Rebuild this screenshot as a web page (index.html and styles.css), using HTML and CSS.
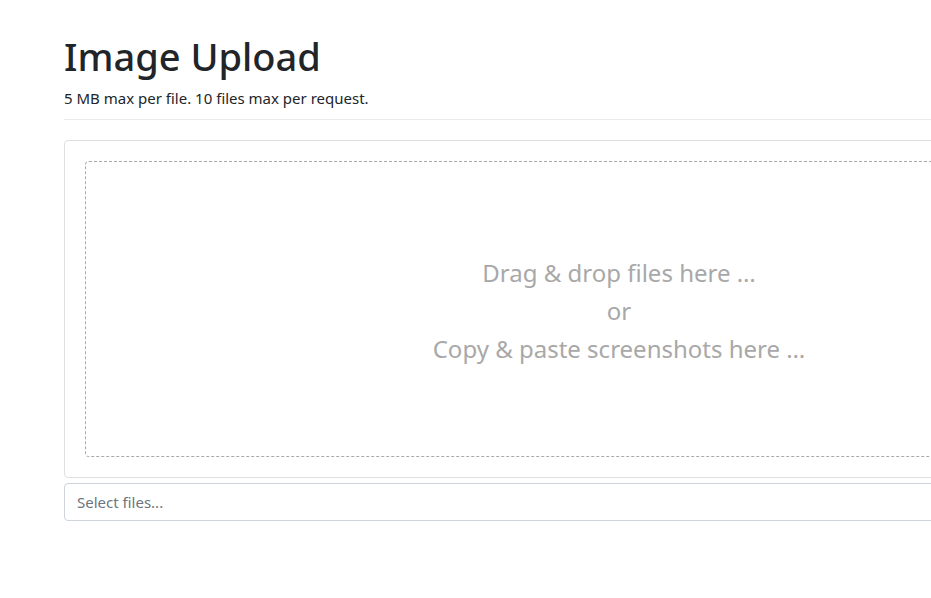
FILE: index.html
```html
<!DOCTYPE html>
<html lang="en">
<head>
<meta charset="utf-8">
<title>Image Upload</title>
<link rel="stylesheet" href="styles.css">
</head>
<body>
<div class="viewport">
  <div class="container">
    <header class="page-header">
      <h1 class="title">Image Upload</h1>
      <p class="subtitle">5 MB max per file. 10 files max per request.</p>
    </header>
    <div class="card">
      <div class="dropzone">
        <div class="drop-text">
          <div>Drag &amp; drop files here …</div>
          <div>or</div>
          <div>Copy &amp; paste screenshots here …</div>
        </div>
      </div>
    </div>
    <div class="file-input">Select files...</div>
  </div>
</div>
</body>
</html>
```

FILE: styles.css
```css
html, body {
  margin: 0;
  padding: 0;
  background: #fff;
}
.viewport {
  width: 931px;
  height: 598px;
  overflow: hidden;
}
.container {
  width: 1110px;
  margin-left: 64px;
  padding-top: 32px;
  font-family: "Noto Sans", "Open Sans", sans-serif;
  color: #212529;
}
.page-header {
  border-bottom: 1px solid #e9ecef;
  padding-bottom: 10px;
  margin-bottom: 20px;
}
.title {
  margin: 0;
  font-size: 38px;
  font-weight: 500;
  line-height: 48px;
  letter-spacing: 0;
}
.subtitle {
  margin: 7px 0 0;
  font-size: 15px;
  line-height: 22px;
}
.card {
  border: 1px solid #dfdfdf;
  border-radius: 4px;
  padding: 20px;
}
.dropzone {
  border: 1px dashed #aaaaaa;
  border-radius: 4px;
  height: 294px;
  display: flex;
  align-items: center;
  justify-content: center;
}
.drop-text {
  text-align: center;
  color: #a8a8a8;
  font-size: 24px;
  line-height: 38px;
  padding-top: 4px;
}
.file-input {
  margin-top: 5px;
  height: 36px;
  border: 1px solid #ced4da;
  border-radius: 4px;
  padding: 0 12px;
  font-size: 15px;
  line-height: 36px;
  color: #6c757d;
}
```
